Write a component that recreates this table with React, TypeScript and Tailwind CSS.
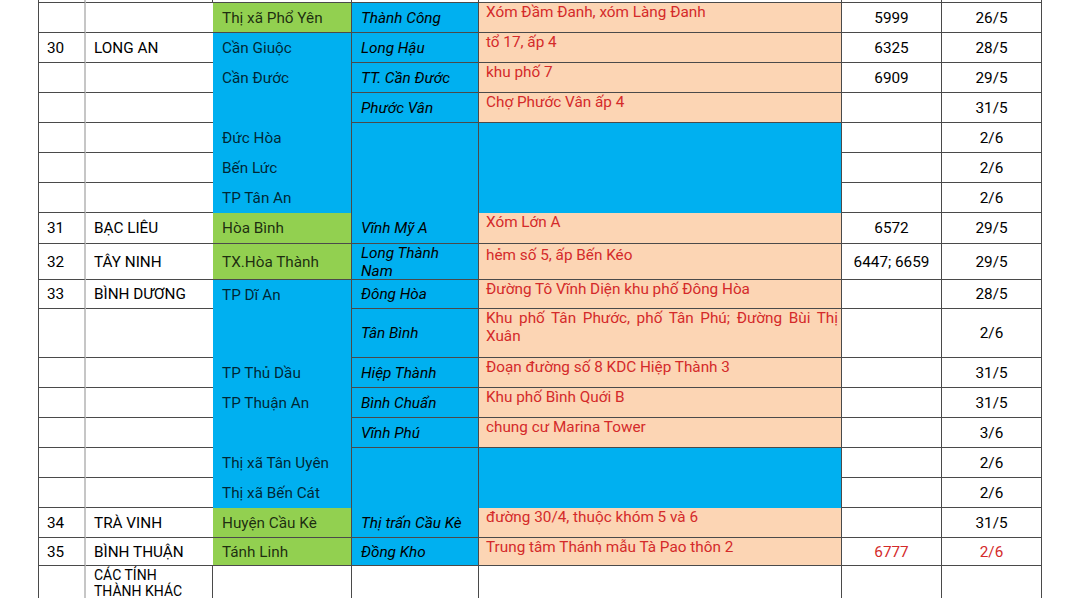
import React from 'react';

type Fill = 'g' | 'b' | 'p' | 'w';

interface Row {
  no?: string;
  prov?: React.ReactNode;
  dist?: string;
  dc: Fill;
  ward?: React.ReactNode;
  wc: Fill;
  addr?: React.ReactNode;
  ac: Fill;
  code?: string;
  date?: string;
  red?: boolean;
}

const rows: Row[] = [
  { dc: 'w', wc: 'w', ac: 'w' },
  { dist: 'Thị xã Phổ Yên', dc: 'g', ward: 'Thành Công', wc: 'b', addr: 'Xóm Đầm Đanh, xóm Làng Đanh', ac: 'p', code: '5999', date: '26/5' },
  { no: '30', prov: 'LONG AN', dist: 'Cần Giuộc', dc: 'b', ward: 'Long Hậu', wc: 'b', addr: 'tổ 17, ấp 4', ac: 'p', code: '6325', date: '28/5' },
  { dist: 'Cần Đước', dc: 'b', ward: 'TT. Cần Đước', wc: 'b', addr: 'khu phố 7', ac: 'p', code: '6909', date: '29/5' },
  { dc: 'b', ward: 'Phước Vân', wc: 'b', addr: 'Chợ Phước Vân ấp 4', ac: 'p', date: '31/5' },
  { dist: 'Đức Hòa', dc: 'b', wc: 'b', ac: 'b', date: '2/6' },
  { dist: 'Bến Lức', dc: 'b', wc: 'b', ac: 'b', date: '2/6' },
  { dist: 'TP Tân An', dc: 'b', wc: 'b', ac: 'b', date: '2/6' },
  { no: '31', prov: 'BẠC LIÊU', dist: 'Hòa Bình', dc: 'g', ward: 'Vĩnh Mỹ A', wc: 'b', addr: 'Xóm Lớn A', ac: 'p', code: '6572', date: '29/5' },
  { no: '32', prov: 'TÂY NINH', dist: 'TX.Hòa Thành', dc: 'g', ward: <>Long Thành<br />Nam</>, wc: 'b', addr: <span className="block pt-[2px]">hẻm số 5, ấp Bến Kéo</span>, ac: 'p', code: '6447; 6659', date: '29/5' },
  { no: '33', prov: 'BÌNH DƯƠNG', dist: 'TP Dĩ An', dc: 'b', ward: 'Đông Hòa', wc: 'b', addr: 'Đường Tô Vĩnh Diện khu phố Đông Hòa', ac: 'p', date: '28/5' },
  {
    dc: 'b', ward: 'Tân Bình', wc: 'b', ac: 'p', date: '2/6',
    addr: (
      <>
        <span className="block pr-[3px] text-justify [text-align-last:justify]">Khu phố Tân Phước, phố Tân Phú; Đường Bùi Thị</span>
        <span className="block">Xuân</span>
      </>
    ),
  },
  { dist: 'TP Thủ Dầu', dc: 'b', ward: 'Hiệp Thành', wc: 'b', addr: 'Đoạn đường số 8 KDC Hiệp Thành 3', ac: 'p', date: '31/5' },
  { dist: 'TP Thuận An', dc: 'b', ward: 'Bình Chuẩn', wc: 'b', addr: 'Khu phố Bình Quới B', ac: 'p', date: '31/5' },
  { dc: 'b', ward: 'Vĩnh Phú', wc: 'b', addr: 'chung cư Marina Tower', ac: 'p', date: '3/6' },
  { dist: 'Thị xã Tân Uyên', dc: 'b', wc: 'b', ac: 'b', date: '2/6' },
  { dist: 'Thị xã Bến Cát', dc: 'b', wc: 'b', ac: 'b', date: '2/6' },
  { no: '34', prov: 'TRÀ VINH', dist: 'Huyện Cầu Kè', dc: 'g', ward: 'Thị trấn Cầu Kè', wc: 'b', addr: 'đường 30/4, thuộc khóm 5 và 6', ac: 'p', date: '31/5' },
  { no: '35', prov: 'BÌNH THUẬN', dist: 'Tánh Linh', dc: 'g', ward: 'Đồng Kho', wc: 'b', addr: 'Trung tâm Thánh mẫu Tà Pao thôn 2', ac: 'p', code: '6777', date: '2/6', red: true },
  {
    dc: 'w', wc: 'w', ac: 'w',
    prov: <span className="block pt-[1px] text-[14px] leading-[16px]">CÁC TỈNH<br />THÀNH KHÁC</span>,
  },
];

const bg: Record<Fill, string> = {
  g: 'bg-[#92d050]',
  b: 'bg-[#00b0f0]',
  p: 'bg-[#fcd5b4]',
  w: 'bg-white',
};

const line = 'border-[#4a4a4a]';

export default function App() {
  return (
    <div className="min-h-[598px] w-[1080px] overflow-hidden bg-white font-['Roboto',sans-serif] text-[15.3px] leading-[18px] text-black">
      <div className="ml-[38px] grid w-[1004px] grid-cols-[48px_127px_139px_127px_363px_100px_100px] grid-rows-[3px_30px_30px_30px_30px_30px_30px_30px_31px_36px_29px_49px_30px_30px_30px_30px_30px_30px_28px_40px]">
        {rows.map((r, i) => {
          const white = r.dc === 'w';
          const cell = 'overflow-hidden whitespace-nowrap';
          return (
            <React.Fragment key={i}>
              {/* STT */}
              <div className={`${cell} flex items-center border-l border-b border-r-2 ${line} border-r-[#c6c6c6] pl-2`}>
                {r.no}
              </div>
              {/* Tỉnh */}
              <div className={`${cell} border-b ${line} pl-2 ${white ? `border-r ${line}` : ''} ${r.prov && typeof r.prov !== 'string' ? '' : 'flex items-center'}`}>
                {r.prov}
              </div>
              {/* Huyện */}
              <div className={`${cell} flex items-center border-r ${line} pl-[9px] text-black/80 ${bg[r.dc]} ${r.dc === 'g' || white ? `border-b ${line}` : ''}`}>
                {r.dist}
              </div>
              {/* Xã */}
              <div className={`${cell} flex items-center border-r ${line} pl-[9px] italic text-black ${bg[r.wc]} ${r.ward || white ? `border-b ${line}` : ''}`}>
                <span>{r.ward}</span>
              </div>
              {/* Địa chỉ */}
              <div className={`${cell} border-r ${line} pl-[7px] text-[#d42a2a] ${bg[r.ac]} ${r.ac !== 'b' ? `border-b ${line}` : ''}`}>
                {r.addr}
              </div>
              {/* Mã */}
              <div className={`${cell} flex items-center justify-center border-r border-b ${line} ${r.red ? 'text-[#d42a2a]' : ''}`}>
                {r.code}
              </div>
              {/* Ngày */}
              <div className={`${cell} flex items-center justify-center border-r border-b ${line} ${r.red ? 'text-[#d42a2a]' : ''}`}>
                {r.date}
              </div>
            </React.Fragment>
          );
        })}
      </div>
    </div>
  );
}
